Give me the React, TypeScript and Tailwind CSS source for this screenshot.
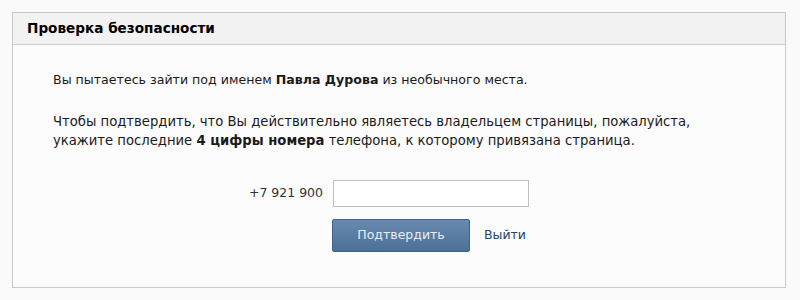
export default function App() {
  return (
    <div className="w-[800px] h-[300px] bg-[#fafafa] pt-[12px] pl-[12px] font-['DejaVu_Sans',Tahoma,sans-serif] text-[#222]">
      <div className="w-[774px] h-[276px] border border-[#c9c9c9] bg-[#fcfcfc] flex flex-col">
        <div className="h-[32px] bg-[#f2f2f2] border-b border-[#cfcfcf] flex items-center pl-[14px] text-[13.6px] font-bold text-black">
          Проверка безопасности
        </div>
        <div className="pl-[40px] pt-[25px] leading-[19px] text-[#1a1a1a]">
          <p className="text-[12.6px]">
            Вы пытаетесь зайти под именем <b>Павла Дурова</b> из необычного места.
          </p>
          <p className="mt-[23px] text-[13.2px]">
            Чтобы подтвердить, что Вы действительно являетесь владельцем страницы, пожалуйста,
            <br />
            укажите последние <b>4 цифры номера</b> телефона, к которому привязана страница.
          </p>
        </div>
        <div className="flex items-center mt-[30px] pl-[234px]">
          <span className="w-[76px] text-right text-[12.5px] text-[#333] mr-[10px]">+7 921 900</span>
          <input className="w-[196px] h-[27px] border border-[#c0c0c0] bg-white outline-none" />
        </div>
        <div className="flex items-center mt-[12px] pl-[319px]">
          <button className="w-[138px] h-[33px] rounded-[2px] border border-[#3f628a] bg-gradient-to-b from-[#6889af] to-[#4d7098] text-[#e8eef5] text-[12.5px]">
            Подтвердить
          </button>
          <a className="ml-[14px] text-[12.5px] text-[#24446a]">Выйти</a>
        </div>
      </div>
    </div>
  );
}
